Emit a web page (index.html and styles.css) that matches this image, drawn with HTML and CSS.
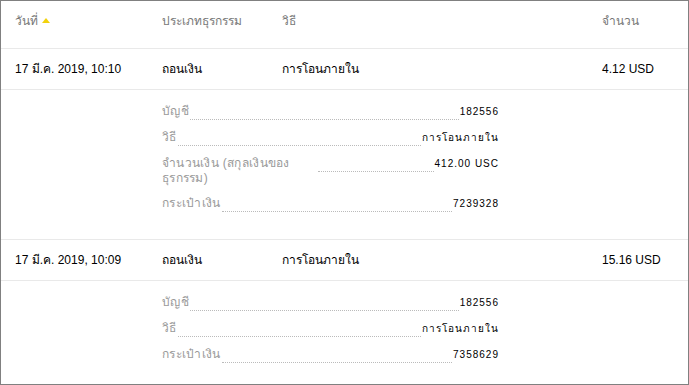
FILE: index.html
```html
<!DOCTYPE html>
<html lang="th">
<head>
<meta charset="utf-8">
<link rel="stylesheet" href="styles.css">
</head>
<body>
<div class="frame">
  <div class="row head">
    <div class="c1">วันที่ <span class="sort"></span></div>
    <div class="c2">ประเภทธุรกรรม</div>
    <div class="c3">วิธี</div>
    <div class="c4">จำนวน</div>
  </div>
  <div class="row data">
    <div class="c1">17 มี.ค. 2019, 10:10</div>
    <div class="c2">ถอนเงิน</div>
    <div class="c3">การโอนภายใน</div>
    <div class="c4">4.12 USD</div>
  </div>
  <div class="details">
    <div class="item"><div class="label">บัญชี</div><div class="dots"></div><div class="value">182556</div></div>
    <div class="item"><div class="label">วิธี</div><div class="dots"></div><div class="value">การโอนภายใน</div></div>
    <div class="item"><div class="label wrap">จำนวนเงิน (สกุลเงินของธุรกรรม)</div><div class="dots"></div><div class="value">412.00 USC</div></div>
    <div class="item"><div class="label">กระเป๋าเงิน</div><div class="dots"></div><div class="value">7239328</div></div>
  </div>
  <div class="row data">
    <div class="c1">17 มี.ค. 2019, 10:09</div>
    <div class="c2">ถอนเงิน</div>
    <div class="c3">การโอนภายใน</div>
    <div class="c4">15.16 USD</div>
  </div>
  <div class="details last">
    <div class="item"><div class="label">บัญชี</div><div class="dots"></div><div class="value">182556</div></div>
    <div class="item"><div class="label">วิธี</div><div class="dots"></div><div class="value">การโอนภายใน</div></div>
    <div class="item"><div class="label">กระเป๋าเงิน</div><div class="dots"></div><div class="value">7358629</div></div>
  </div>
</div>
</body>
</html>
```
FILE: styles.css
```css
* { box-sizing: border-box; }
html, body { margin: 0; padding: 0; background: #fff; }
body { font-family: "Liberation Sans", Arial, sans-serif; font-size: 12px; color: #000; }
.frame {
  width: 689px;
  height: 385px;
  border: 1px solid #808080;
  overflow: hidden;
}
.row {
  display: flex;
  align-items: center;
  padding-left: 14px;
  border-bottom: 1px solid #e9e9e9;
}
.head { height: 48px; color: #777; padding-bottom: 8px; }
.data { height: 41px; padding-bottom: 1px; }
.c1 { width: 147px; }
.c2 { width: 120px; }
.c3 { width: 320px; }
.c4 { width: 80px; }
.sort {
  display: inline-block;
  width: 0; height: 0;
  border-left: 4.5px solid transparent;
  border-right: 4.5px solid transparent;
  border-bottom: 5px solid #f2d20c;
  vertical-align: 2px;
  margin-left: 1px;
}
.details {
  padding: 14px 0 0 161px;
  height: 150px;
  border-bottom: 1px solid #e9e9e9;
}
.details.last { border-bottom: none; height: auto; }
.item {
  display: flex;
  align-items: flex-start;
  width: 336px;
  margin-bottom: 10px;
}
.label {
  color: #999;
  font-size: 12px;
  line-height: 15px;
  letter-spacing: 0.3px;
  flex: none;
}
.label.wrap { width: 155px; }
.dots {
  flex: 1;
  height: 16px;
  border-bottom: 1px dotted #bbb;
  margin: 0 1px;
}
.value {
  font-size: 10px;
  line-height: 15px;
  letter-spacing: 1px;
  margin-right: -1px;
  flex: none;
}
```
